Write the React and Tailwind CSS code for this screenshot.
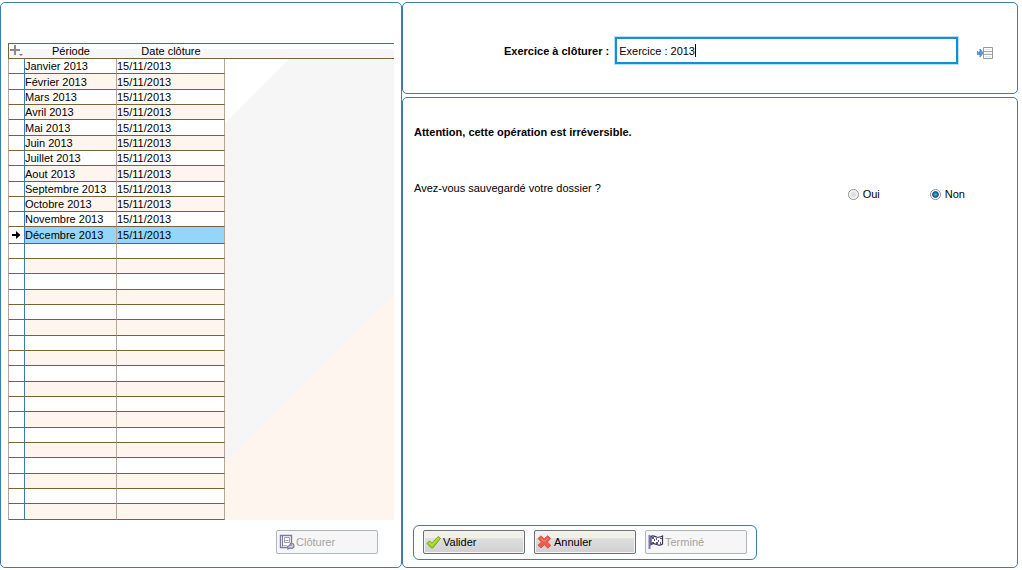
import { useState } from 'react';
import clsx from 'clsx';

const CLOSING_DATE = '15/11/2013';

// An empty month is a blank line of the grid
const months = [
  'Janvier', 'Février', 'Mars', 'Avril', 'Mai', 'Juin',
  'Juillet', 'Aout', 'Septembre', 'Octobre', 'Novembre', 'Décembre',
];

const periods = Array.from({ length: 30 }, (_, index) => ({
  id: index,
  label: months[index] ? `${months[index]} 2013` : '',
  date: months[index] ? CLOSING_DATE : '',
}));

const SELECTED = 11;

const rowHeight = (index) => {
  if (index === SELECTED) return 'h-[17px]';
  if (index < 9) return index % 3 === 1 ? 'h-4' : 'h-[15px]';
  if (index > SELECTED) return index % 3 === 2 ? 'h-4' : 'h-[15px]';
  return 'h-[15px]';
};

const BookIcon = () => (
  <svg width="16" height="16" viewBox="0 0 16 16" fill="none" stroke="#7f7a9f">
    <path d="M1.5 1.5h11v12h-11z" fill="#fff" strokeWidth="1.4" />
    <path d="M3.5 1.5v11" />
    <path d="M5.5 3.500h5v5h-5zM6.500 6.500h3" stroke="#a19db8" />
    <path d="M4 11.500h4" stroke="#b8b4cc" />
    <path d="M8.5 12.500l2-1 1-2 3 .5 .5 3-2 1.500-2-.5-2 1z" fill="#d5d2e2" strokeWidth="1.2" />
    <path d="M11.500 11.500l1.500-.5" strokeWidth="1.2" />
  </svg>
);

const CheckIcon = () => (
  <svg width="16" height="16" viewBox="0 0 16 16">
    <path
      d="M1 9.500l2.300-2.500 2.700 2.200L12.200 2.500l2.300 1.800L7 13.800 5.200 13.800z"
      fill="#9dd610"
      stroke="#6a9418"
      strokeWidth=".8"
      strokeLinejoin="round"
    />
    <path d="M3 8.500l3 2.300L12.800 4" fill="none" stroke="#b4e62e" strokeWidth="1.2" />
  </svg>
);

const CrossIcon = () => (
  <svg width="16" height="16" viewBox="0 0 16 16">
    <path
      d="M4 1.800L7.200 5l3.400-3.300 3 2.800L10.400 8l3.400 3.400-3 2.800-3.500-3.400L4 14l-3-2.800L4.400 8 1 4.600z"
      fill="#f2594b"
      stroke="#c9473c"
      strokeWidth=".8"
      strokeLinejoin="round"
    />
    <path d="M3.800 4.400l3.400 3.200 3.400-3.200" fill="none" stroke="#fa9385" />
  </svg>
);

const FlagIcon = () => (
  <svg width="16" height="16" viewBox="0 0 16 16">
    <path d="M1.500 1v14" stroke="#8078a8" strokeWidth="2" />
    <path
      d="M3 2.500c2-1.500 4 0 5.500 .5s3 .5 6-1v8c-2 1.500-4 1.500-6 .5s-3.500-1.500-5.500 0z"
      fill="#fff"
      stroke="#37315c"
      strokeWidth="1.2"
    />
    <path d="M4 3h2v2H4zM8 4h1v2H8zM12 4h2v1h-2zM6 5h1v2H6zM10 6h1v2h-1zM4 8h2v1H4zM8 8h2v2H8zM12 8h1v2h-1z" fill="#5b5480" />
  </svg>
);

const ListIcon = () => (
  <svg width="16" height="14" viewBox="0 0 16 14">
    <path d="M.5 5v4M1.500 6h1.500V3L6 7 3 11V8.500H1.500z" fill="#5b9bd0" stroke="#3f7fb8" strokeWidth=".8" />
    <path d="M6.500 1.500h9v11h-9z" fill="#fff" stroke="#999" />
    <path d="M7 5.500h8M7 8.500h8" stroke="#a9a9a9" />
    <path d="M8 3.500h6M8 7h6M8 10.500h6" stroke="#cdeefa" />
  </svg>
);

const AddIcon = () => (
  <svg width="15" height="14" viewBox="0 0 15 14">
    <path d="M6 1v10M1 6h10" stroke="#8a8a8a" strokeWidth="2" />
    <path d="M10 10h4l-2 2z" fill="#777" />
  </svg>
);

const ArrowIcon = () => (
  <svg className="mx-auto block" width="9" height="8" viewBox="0 0 9 8">
    <path d="M0 4h7" stroke="#000" strokeWidth="2" />
    <path d="M4 0L8.500 4 4 8z" fill="#000" />
  </svg>
);

const Panel = ({ className, children }) => (
  <section className={clsx('rounded-[5px] border border-[#3a7cb4] bg-white', className)}>{children}</section>
);

const ActionButton = ({ icon: Icon, disabled, children }) => (
  <button
    type="button"
    disabled={disabled}
    className={clsx(
      'flex h-6 w-[102px] items-center gap-px rounded-[2px] border px-[2px] text-left',
      disabled
        ? 'border-[#a9b9b9] bg-[#f6f6f6] text-[#a3a3a3]'
        : 'border-[#6a7074] bg-linear-to-b from-[#f1f1ea] from-30% via-[#dedede] via-35% to-[#d0d0d0] shadow-[inset_0_0_0_1px_#f4f4f4]'
    )}
  >
    <Icon />
    {children}
  </button>
);

const RadioOption = ({ label, checked, onChange }) => (
  <label className="flex items-center gap-1">
    <input
      type="radio"
      name="backup"
      checked={checked}
      onChange={onChange}
      className="size-[11px] appearance-none rounded-full border border-[#8b8f94] bg-[radial-gradient(circle,#d4d4d4_0,#e6e6e6_40%,#fff_70%)] checked:bg-[radial-gradient(circle,#4fb4e6_0,#12547f_45%,#fff_60%)]"
    />
    {label}
  </label>
);

const PeriodTable = () => (
  <table className="w-full table-fixed border-separate border-spacing-0 text-left">
    <thead>
      <tr className="h-4 leading-[14px] *:border-y *:border-[#7a6238] *:bg-linear-to-b *:from-white *:from-30% *:to-[#f6f6f6] *:to-40% *:p-0 *:text-center *:font-normal">
        <th className="w-[17px] border-l border-l-[#b9a79f]">
          <button type="button" aria-label="Ajouter" className="block">
            <AddIcon />
          </button>
        </th>
        <th className="w-[92px]">Période</th>
        <th className="w-[108px]">Date clôture</th>
        <td />
      </tr>
    </thead>
    <tbody>
      {periods.map((period, index) => (
        <tr
          key={period.id}
          className={clsx('leading-[14px] *:p-0', rowHeight(index))}
        >
          <td className="border-x border-b border-[#7a6238] border-r-[#3a7cb4] border-l-[#b9a79f]">
            {index === SELECTED && <ArrowIcon />}
          </td>
          {[period.label, period.date].map((text, column) => (
            <td
              key={column}
              className={clsx(
                'whitespace-nowrap border-r border-b border-[#7a6238] border-r-[#b5a596]',
                index === SELECTED ? 'bg-[#94d5f9]' : index % 2 ? 'bg-[#fff5ef]' : 'bg-white'
              )}
            >
              {text}
            </td>
          ))}
          {index === 0 && (
            <td
              rowSpan={periods.length}
              className="bg-[linear-gradient(135deg,#fff_45px,#f6f6f6_46px,#f6f6f6_285px,#fff5ef_286px)]"
            />
          )}
        </tr>
      ))}
    </tbody>
  </table>
);

const App = () => {
  const [exercise, setExercise] = useState('Exercice : 2013');
  const [saved, setSaved] = useState(false);

  return (
    <main className="grid min-h-screen grid-cols-[402fr_616fr] bg-white py-0.5 pr-1 font-['Liberation_Sans',Arial,sans-serif] text-[11px] leading-4 text-black">
      {/* Periods */}
      <Panel className="pt-10 pr-[7px] pl-[7px]">
        <PeriodTable />
        <div className="mt-[10px] flex justify-end pr-4">
          <ActionButton icon={BookIcon} disabled>Clôturer</ActionButton>
        </div>
      </Panel>

      <div className="flex flex-col gap-[3px]">
        {/* Exercise to close */}
        <Panel className="flex items-center pt-[34px] pr-6 pb-[29px] pl-[101px]">
          <label htmlFor="exercise" className="mr-[6px] whitespace-nowrap font-bold">
            Exercice à clôturer :
          </label>
          <div className="relative flex-1">
            <input
              id="exercise"
              value={exercise}
              onChange={(event) => setExercise(event.target.value)}
              className="block h-[27px] w-full border-2 border-[#148fd0] px-[2px] outline outline-offset-0 outline-[#b4e2f4]"
            />
            {/* Text cursor */}
            <span className="absolute top-[7px] left-20 h-[13px] w-px bg-black" />
          </div>
          <button type="button" aria-label="Liste des exercices" className="ml-[19px] pt-1">
            <ListIcon />
          </button>
        </Panel>

        {/* Confirmation */}
        <Panel className="flex flex-1 flex-col px-[10px] pt-[26px] pb-[7px]">
          <p className="pl-px font-bold">Attention, cette opération est irréversible.</p>
          <div className="mt-10 flex justify-between pl-px">
            <p>Avez-vous sauvegardé votre dossier ?</p>
            <div className="flex gap-[50px] pt-[6px] pr-[42px]">
              <RadioOption label="Oui" checked={saved} onChange={() => setSaved(true)} />
              <RadioOption label="Non" checked={!saved} onChange={() => setSaved(false)} />
            </div>
          </div>
          <div className="mt-auto flex gap-[9px] self-start rounded-md border border-[#3a7cb4] px-[9px] pt-1 pb-[5px]">
            <ActionButton icon={CheckIcon}>Valider</ActionButton>
            <ActionButton icon={CrossIcon}>Annuler</ActionButton>
            <ActionButton icon={FlagIcon} disabled>Terminé</ActionButton>
          </div>
        </Panel>
      </div>
    </main>
  );
};

export default App;
